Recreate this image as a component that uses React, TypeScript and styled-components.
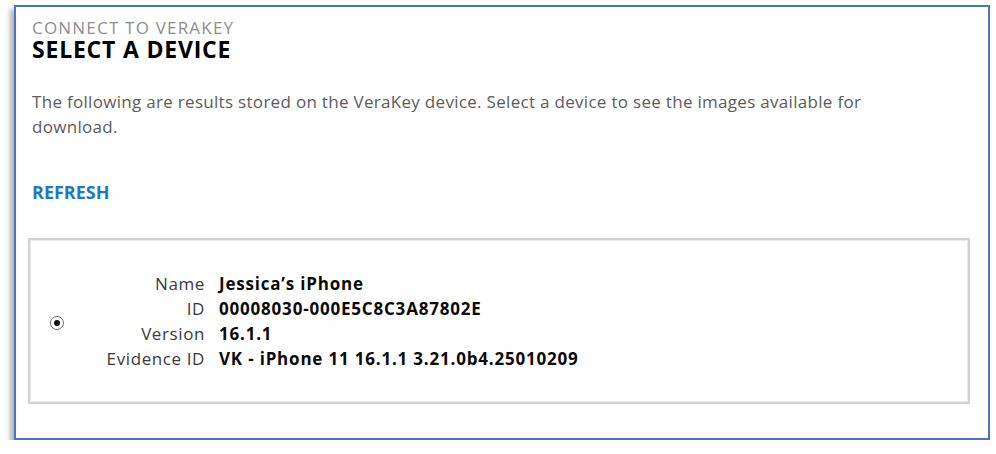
import React from "react";
import styled, { createGlobalStyle } from "styled-components";

const Global = createGlobalStyle`
  html, body { margin: 0; padding: 0; background: #ffffff; }
  body { font-family: "Open Sans", "Noto Sans", sans-serif; }
  * { box-sizing: border-box; }
`;

const Frame = styled.div`
  margin: 5px 0 0 14px;
  width: 976px;
  height: 435px;
  border: 2px solid #4a74c6;
  background: #ffffff;
  box-shadow: -4px 4px 5px rgba(0, 0, 0, 0.3);
  padding: 11px 18px 0 12px;
  display: flex;
  flex-direction: column;
`;

const TextBlock = styled.div`
  padding-left: 4px;
`;

const Kicker = styled.div`
  font-size: 17px;
  line-height: 20px;
  color: #8e8e8e;
  letter-spacing: 1.2px;
`;

const Heading = styled.h1`
  margin: 0;
  font-size: 23px;
  line-height: 23px;
  font-weight: 700;
  color: #000000;
  letter-spacing: 0.8px;
`;

const Description = styled.p`
  margin: 28px 0 0 0;
  font-size: 17px;
  line-height: 25px;
  color: #5c5c5c;
  letter-spacing: 0.3px;
  max-width: 860px;
`;

const RefreshLink = styled.a`
  display: block;
  margin-top: 42px;
  font-size: 18px;
  line-height: 22px;
  font-weight: 700;
  color: #2177c0;
  cursor: pointer;
`;

const DeviceCard = styled.div`
  margin-top: 35px;
  height: 166px;
  border: 2px solid #d2d2d2;
  box-shadow: inset 0 0 0 1px #ececec;
  display: flex;
  align-items: center;
  padding-left: 20px;
`;

const Radio = styled.span`
  width: 14px;
  height: 14px;
  margin-top: 3px;
  border-radius: 50%;
  border: 1px solid #6f6f6f;
  display: flex;
  align-items: center;
  justify-content: center;
  flex: none;
  &::after {
    content: "";
    width: 6px;
    height: 6px;
    border-radius: 50%;
    background: #111111;
  }
`;

const Details = styled.dl`
  margin: 0;
  display: grid;
  grid-template-columns: 141px auto;
  column-gap: 14px;
  row-gap: 0;
`;

const Label = styled.dt`
  text-align: right;
  font-size: 17px;
  line-height: 25px;
  color: #3a3a3a;
  letter-spacing: 0.6px;
`;

const Value = styled.dd`
  margin: 0;
  font-size: 17px;
  line-height: 25px;
  font-weight: 700;
  color: #0a0a0a;
  letter-spacing: 0.8px;
`;

const device = [
  ["Name", "Jessica\u2019s iPhone"],
  ["ID", "00008030-000E5C8C3A87802E"],
  ["Version", "16.1.1"],
  ["Evidence ID", "VK - iPhone 11 16.1.1 3.21.0b4.25010209"],
];

export default function App() {
  return (
    <>
      <Global />
      <Frame>
        <TextBlock>
          <Kicker>CONNECT TO VERAKEY</Kicker>
          <Heading>SELECT A DEVICE</Heading>
          <Description>
            The following are results stored on the VeraKey device. Select a device to see the images available for download.
          </Description>
          <RefreshLink>REFRESH</RefreshLink>
        </TextBlock>
        <DeviceCard>
          <Radio />
          <Details>
            {device.map(([k, v]) => (
              <React.Fragment key={k}>
                <Label>{k}</Label>
                <Value>{v}</Value>
              </React.Fragment>
            ))}
          </Details>
        </DeviceCard>
      </Frame>
    </>
  );
}
